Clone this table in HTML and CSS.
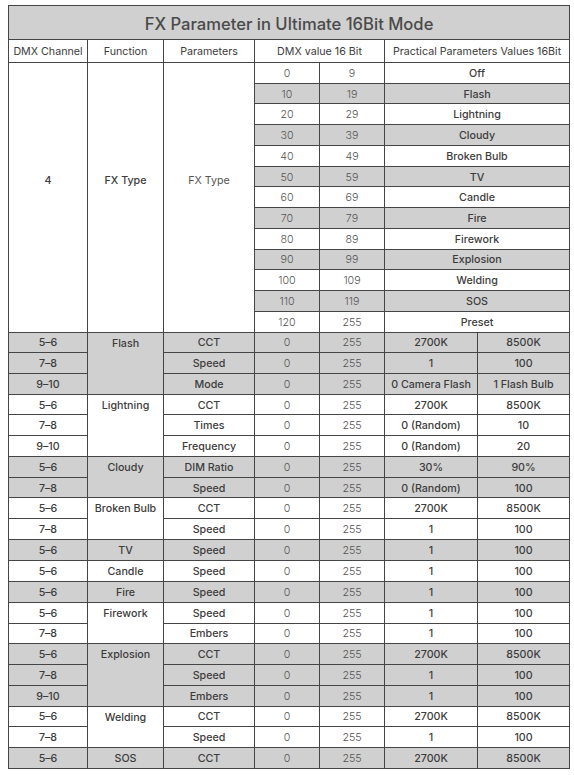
FILE: index.html
```html
<!DOCTYPE html>
<html>
<head>
<meta charset="utf-8">
<link rel="stylesheet" href="styles.css">
</head>
<body>
<table class="fx">
<colgroup>
<col class="c1"><col class="c2"><col class="c3"><col class="c4"><col class="c5"><col class="c6"><col class="c7">
</colgroup>
<tr class="title"><th colspan="7">FX Parameter in Ultimate 16Bit Mode</th></tr>
<tr class="head"><th>DMX Channel</th><th>Function</th><th>Parameters</th><th colspan="2">DMX value 16 Bit</th><th colspan="2">Practical Parameters Values 16Bit</th></tr>

<tr><td rowspan="13" class="big ch">4</td><td rowspan="13" class="big fn">FX Type</td><td rowspan="13" class="big pl">FX Type</td><td class="v">0</td><td class="v">9</td><td colspan="2" class="p">Off</td></tr>
<tr class="s"><td class="v">10</td><td class="v">19</td><td colspan="2" class="p">Flash</td></tr>
<tr><td class="v">20</td><td class="v">29</td><td colspan="2" class="p">Lightning</td></tr>
<tr class="s"><td class="v">30</td><td class="v">39</td><td colspan="2" class="p">Cloudy</td></tr>
<tr><td class="v">40</td><td class="v">49</td><td colspan="2" class="p">Broken Bulb</td></tr>
<tr class="s"><td class="v">50</td><td class="v">59</td><td colspan="2" class="p">TV</td></tr>
<tr><td class="v">60</td><td class="v">69</td><td colspan="2" class="p">Candle</td></tr>
<tr class="s"><td class="v">70</td><td class="v">79</td><td colspan="2" class="p">Fire</td></tr>
<tr><td class="v">80</td><td class="v">89</td><td colspan="2" class="p">Firework</td></tr>
<tr class="s"><td class="v">90</td><td class="v">99</td><td colspan="2" class="p">Explosion</td></tr>
<tr><td class="v">100</td><td class="v">109</td><td colspan="2" class="p">Welding</td></tr>
<tr class="s"><td class="v">110</td><td class="v">119</td><td colspan="2" class="p">SOS</td></tr>
<tr><td class="v">120</td><td class="v">255</td><td colspan="2" class="p">Preset</td></tr>

<tr class="g"><td class="ch">5–6</td><td rowspan="3" class="fn">Flash</td><td class="pm">CCT</td><td class="v">0</td><td class="v">255</td><td class="p">2700K</td><td class="p">8500K</td></tr>
<tr class="g"><td class="ch">7–8</td><td class="pm">Speed</td><td class="v">0</td><td class="v">255</td><td class="p">1</td><td class="p">100</td></tr>
<tr class="g"><td class="ch">9–10</td><td class="pm">Mode</td><td class="v">0</td><td class="v">255</td><td class="p">0 Camera Flash</td><td class="p">1 Flash Bulb</td></tr>

<tr><td class="ch">5–6</td><td rowspan="3" class="fn">Lightning</td><td class="pm">CCT</td><td class="v">0</td><td class="v">255</td><td class="p">2700K</td><td class="p">8500K</td></tr>
<tr><td class="ch">7–8</td><td class="pm">Times</td><td class="v">0</td><td class="v">255</td><td class="p">0 (Random)</td><td class="p">10</td></tr>
<tr><td class="ch">9–10</td><td class="pm">Frequency</td><td class="v">0</td><td class="v">255</td><td class="p">0 (Random)</td><td class="p">20</td></tr>

<tr class="g"><td class="ch">5–6</td><td rowspan="2" class="fn">Cloudy</td><td class="pm">DIM Ratio</td><td class="v">0</td><td class="v">255</td><td class="p">30%</td><td class="p">90%</td></tr>
<tr class="g"><td class="ch">7–8</td><td class="pm">Speed</td><td class="v">0</td><td class="v">255</td><td class="p">0 (Random)</td><td class="p">100</td></tr>

<tr><td class="ch">5–6</td><td rowspan="2" class="fn">Broken Bulb</td><td class="pm">CCT</td><td class="v">0</td><td class="v">255</td><td class="p">2700K</td><td class="p">8500K</td></tr>
<tr><td class="ch">7–8</td><td class="pm">Speed</td><td class="v">0</td><td class="v">255</td><td class="p">1</td><td class="p">100</td></tr>

<tr class="g"><td class="ch">5–6</td><td class="fn">TV</td><td class="pm">Speed</td><td class="v">0</td><td class="v">255</td><td class="p">1</td><td class="p">100</td></tr>
<tr><td class="ch">5–6</td><td class="fn">Candle</td><td class="pm">Speed</td><td class="v">0</td><td class="v">255</td><td class="p">1</td><td class="p">100</td></tr>
<tr class="g"><td class="ch">5–6</td><td class="fn">Fire</td><td class="pm">Speed</td><td class="v">0</td><td class="v">255</td><td class="p">1</td><td class="p">100</td></tr>

<tr><td class="ch">5–6</td><td rowspan="2" class="fn">Firework</td><td class="pm">Speed</td><td class="v">0</td><td class="v">255</td><td class="p">1</td><td class="p">100</td></tr>
<tr><td class="ch">7–8</td><td class="pm">Embers</td><td class="v">0</td><td class="v">255</td><td class="p">1</td><td class="p">100</td></tr>

<tr class="g"><td class="ch">5–6</td><td rowspan="3" class="fn">Explosion</td><td class="pm">CCT</td><td class="v">0</td><td class="v">255</td><td class="p">2700K</td><td class="p">8500K</td></tr>
<tr class="g"><td class="ch">7–8</td><td class="pm">Speed</td><td class="v">0</td><td class="v">255</td><td class="p">1</td><td class="p">100</td></tr>
<tr class="g"><td class="ch">9–10</td><td class="pm">Embers</td><td class="v">0</td><td class="v">255</td><td class="p">1</td><td class="p">100</td></tr>

<tr><td class="ch">5–6</td><td rowspan="2" class="fn">Welding</td><td class="pm">CCT</td><td class="v">0</td><td class="v">255</td><td class="p">2700K</td><td class="p">8500K</td></tr>
<tr><td class="ch">7–8</td><td class="pm">Speed</td><td class="v">0</td><td class="v">255</td><td class="p">1</td><td class="p">100</td></tr>

<tr class="g"><td class="ch">5–6</td><td class="fn">SOS</td><td class="pm">CCT</td><td class="v">0</td><td class="v">255</td><td class="p">2700K</td><td class="p">8500K</td></tr>
</table>
</body>
</html>
```

FILE: styles.css
```css
html, body {
  background: #ffffff;
}
body {
  margin: 5px 0 0 8px;
  font-family: Inter, "Noto Sans", sans-serif;
  color: #3c3c3c;
}
.fx {
  border-collapse: collapse;
  table-layout: fixed;
  width: 561px;
  font-size: 10.7px;
}
.c1 { width: 79px; }
.c2 { width: 76px; }
.c3 { width: 91px; }
.c4 { width: 65px; }
.c5 { width: 65px; }
.c6 { width: 93px; }
.c7 { width: 92px; }
.fx th, .fx td {
  border: 1px solid #454545;
  padding: 2px 0 0;
  text-align: center;
  vertical-align: middle;
  height: 17.74px;
  line-height: 14px;
  white-space: nowrap;
}
.title th {
  height: 31px;
  background: #d0d0d0;
  font-size: 16.6px;
  font-weight: 500;
  color: #4a4a4a;
}
.head th {
  height: 20px;
  font-weight: 400;
  color: #3c3c3c;
}
.s .v, .s .p { background: #d0d0d0; }
.g td { background: #d0d0d0; }
.fn {
  font-weight: 500;
}
.fx td.fn { vertical-align: top; line-height: 18px; }
.fx td.big { vertical-align: top; padding-top: 111px; line-height: 14px; }
.ch { font-weight: 500; }
.pm { font-weight: 500; }
.pl { font-weight: 400; color: #555; }
.v { font-weight: 300; color: #555; }
.p { font-weight: 500; }
```
